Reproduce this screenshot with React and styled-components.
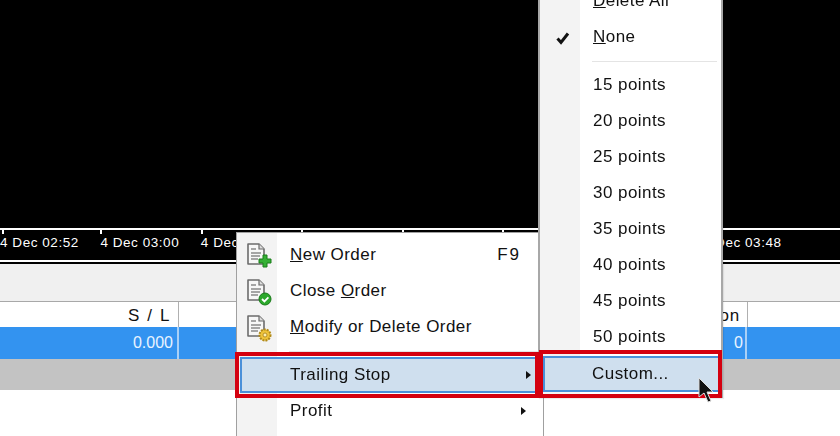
import React from 'react';
import styled, { createGlobalStyle } from 'styled-components';

const Global = createGlobalStyle`
  html, body { margin: 0; padding: 0; background: #fff; }
  * { box-sizing: border-box; }
`;
const Page = styled.div`
  position: relative; width: 840px; height: 436px; overflow: hidden;
  font-family: "Liberation Sans", Arial, sans-serif; color: #111;
  filter: blur(0.35px);
`;
const Chart = styled.div`height: 228px; background: #000;`;
const Axis = styled.div`
  height: 34px; background: #000; border-top: 2px solid #fff; border-bottom: 2px solid #fff;
  display: flex; padding-left: 2px;
`;
const TimeCell = styled.div`
  position: relative; width: 100.4px; flex: none; color: #fff; font-size: 13.5px; letter-spacing: 0.55px;
  padding: 5px 0 0 0; white-space: nowrap; margin-left: ${p => p.$first ? '-2px' : 0};
  &::before { content: ""; position: absolute; left: ${p => p.$first ? '2px' : 0}; top: 0; width: 2px; height: 4px; background: #fff; }
`;
const Strip = styled.div`height: 40px; background: #f0f0f0; border-top: 2px solid #000; border-bottom: 1px solid #a8a8a8;`;
const Header = styled.div`height: 25px; background: #fff; display: grid; grid-template-columns: 179px 569px 92px;`;
const HeadCell = styled.div`
  text-align: right; font-size: 17px; letter-spacing: 1.6px; padding: 4px 7px 0 0; line-height: 19px;
  border-right: 1px solid #b0b0b0; overflow: hidden;
  &:nth-child(2) { padding-right: 7px; letter-spacing: 0.8px; }
  &:last-child { border: 0; }
`;
const Selected = styled.div`height: 32px; background: #3393f0; display: grid; grid-template-columns: 179px 568px 93px;`;
const SelCell = styled.div`
  text-align: right; color: #eaf4ff; font-size: 16px; letter-spacing: 0; padding: 7px 4px 0 0;
  border-right: 2px solid #a9d0f7;
  &:nth-child(2) { padding-right: 2px; }
  &:last-child { border: 0; }
`;
const GrayRow = styled.div`height: 31px; background: #c3c3c3;`;

const Menu = styled.div`
  position: absolute; left: 236px; top: 232px; width: 308px; height: 260px;
  background: #fff; border: 1px solid #a0a0a0; padding-top: 4px;
  display: flex; flex-direction: column;
  &::before { content: ""; position: absolute; left: 0; top: 0; bottom: 0; width: 40px; background: #f3f3f3; }
`;
const SubMenu = styled(Menu)`
  left: 538px; top: -17px; width: 185px; height: 415px; padding: 0;
  border-width: 0 2px 2px 2px; border-color: #a8a8a8;
  box-shadow: 1px 1px 1px rgba(0,0,0,.08);
`;
const Item = styled.div`
  position: relative; height: 36px; flex: none; display: flex; align-items: center;
  padding-left: 53px; padding-right: ${p => p.$sub ? '0' : '22px'};
  font-size: 17px; letter-spacing: 0.45px; white-space: nowrap;
  ${p => p.$active && `
    margin: ${p.$sub ? '1px' : '0'} 1px 0 3px; padding-left: ${p.$sub ? '47px' : '48px'}; padding-right: 9px;
    background: #cfdfee; border: 2px solid #4a90d9;
  `}
`;
const Label = styled.span`flex: 1;`;
const Key = styled.span`letter-spacing: 2px;`;
const Arrow = styled.span`
  width: 0; height: 0; margin-right: ${p => p.$inset}px;
  border-left: 5px solid #111; border-top: 4px solid transparent; border-bottom: 4px solid transparent;
`;
const Ic = styled.span`position: absolute; left: 9px; top: 5px; width: 26px; height: 28px; display: block;`;
const Check = styled.span`position: absolute; left: 16px; top: 11px; display: block; width: 14px; height: 14px;`;
const Sep = styled.div`
  position: relative; height: ${p => p.$h}px; flex: none;
  &::after { content: ""; position: absolute; left: 52px; right: 4px; top: ${p => p.$h / 2}px; height: 1px; background: #e4e4e4; }
`;
const RedBox = styled.div`
  position: absolute; left: ${p => p.$x}px; top: ${p => p.$y}px; width: ${p => p.$w}px; height: ${p => p.$h}px;
  border: 4px solid #d4000f;
`;
const Cursor = styled.svg`position: absolute; left: 697px; top: 377px;`;

const Doc = ({ children }) => (
  <svg width="26" height="28" viewBox="0 0 26 28">
    <path d="M2 2h11l5 5v15H2z" fill="#f7f7f7" stroke="#6c6c6c" strokeWidth="1.6" strokeLinejoin="round" />
    <path d="M13 2v5h5" fill="#ddd" stroke="#6c6c6c" strokeWidth="1.2" />
    <path d="M5 7h5M5 11h10M5 14h9M5 17h7" stroke="#8a8a8a" strokeWidth="1.3" />
    {children}
  </svg>
);
const times = ['4 Dec 02:52', '4 Dec 03:00', '4 Dec 03:08', '4 Dec 03:16', '4 Dec 03:24', '4 Dec 03:32', '4 Dec 03:40', '4 Dec 03:48'];
const points = [15, 20, 25, 30, 35, 40, 45, 50];

export default function App() {
  return (
    <Page>
      <Global />
      <Chart />
      <Axis>
        {times.map((t, i) => <TimeCell key={i} $first={i === 0}>{t}</TimeCell>)}
      </Axis>
      <Strip />
      <Header>
        <HeadCell>S / L</HeadCell>
        <HeadCell>on</HeadCell>
        <HeadCell />
      </Header>
      <Selected>
        <SelCell>0.000</SelCell>
        <SelCell>0</SelCell>
        <SelCell />
      </Selected>
      <GrayRow />
      <Menu>
        <Item>
          <Ic><Doc><path d="M17 13h4v4h4v4h-4v4h-4v-4h-4v-4h4z" fill="#35b035" stroke="#1b7d1b" strokeWidth="1" /></Doc></Ic>
          <Label><u>N</u>ew Order</Label><Key>F9</Key>
        </Item>
        <Item>
          <Ic><Doc><circle cx="19" cy="21" r="6" fill="#2ca82c" stroke="#187a18" /><path d="M16 21l2.4 2.4 4-4" fill="none" stroke="#fff" strokeWidth="1.8" /></Doc></Ic>
          <Label>Close <u>O</u>rder</Label>
        </Item>
        <Item>
          <Ic><Doc><circle cx="19" cy="21" r="5.5" fill="#eec33a" stroke="#b28a17" strokeWidth="2" strokeDasharray="2 1" /><circle cx="19" cy="21" r="2" fill="#fbeeb0" stroke="#a8801a" strokeWidth=".8" /></Doc></Ic>
          <Label><u>M</u>odify or Delete Order</Label>
        </Item>
        <Sep $h={12} />
        <Item $active><Label>Trailing Stop</Label><Arrow $inset={0} /></Item>
        <Item><Label>Profit</Label><Arrow $inset={-5} /></Item>
      </Menu>
      <SubMenu>
        <Item $sub><Label><u>D</u>elete All</Label></Item>
        <Item $sub>
          <Check><svg width="14" height="14" viewBox="0 0 14 14"><path d="M1.5 7.5l3.5 4 7-9" fill="none" stroke="#111" strokeWidth="3" /></svg></Check>
          <Label><u>N</u>one</Label>
        </Item>
        <Sep $h={12} />
        {points.map(n => <Item $sub key={n}><Label>{n} points</Label></Item>)}
        <Item $active $sub><Label>Custom...</Label></Item>
      </SubMenu>
      <RedBox $x={235} $y={352} $w={304} $h={46} />
      <RedBox $x={539} $y={350} $w={183} $h={48} />
      <Cursor width="18" height="28" viewBox="0 0 18 28">
        <path d="M2 1v19l5-4 4 9 3-1-4-9h6z" fill="#111" stroke="#ddd" strokeWidth="1" />
      </Cursor>
    </Page>
  );
}
